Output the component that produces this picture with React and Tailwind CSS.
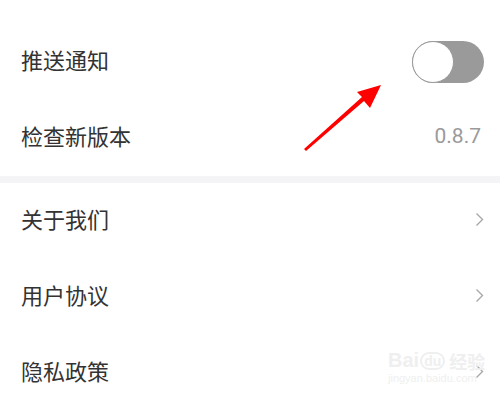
import React from 'react';

const Chevron = () => (
  <svg width="9" height="15" viewBox="0 0 9 15" className="shrink-0 mb-[3px]">
    <path d="M1.5 1.5 L7.5 7.5 L1.5 13.5" fill="none" stroke="#a8a8a8" strokeWidth="1.4" />
  </svg>
);

const Toggle = () => (
  <div className="relative w-[72px] h-[42px] rounded-full bg-[#9a9a9a]">
    <div className="absolute left-0 top-0 w-[42px] h-[42px] rounded-full bg-white border border-[#9a9a9a]" />
  </div>
);

const Row = ({ label, children }) => (
  <div className="flex items-center justify-between h-[76px] pl-[21px] pr-[16px]">
    <span className="text-[22px] text-[#333] pb-[6px]">{label}</span>
    {children}
  </div>
);

export default function App() {
  return (
    <div
      className="relative w-[500px] h-[405px] overflow-hidden bg-white"
      style={{ fontFamily: '"Noto Sans CJK SC", "Noto Sans", sans-serif' }}
    >
      <div className="pt-[24px]">
        <Row label="推送通知">
          <Toggle />
        </Row>
        <Row label="检查新版本">
          <span className="text-[21px] text-[#9a9a9a] pr-[3px] pb-[2px]" style={{ fontFamily: 'Roboto, sans-serif' }}>0.8.7</span>
        </Row>
        <div className="h-[7px] bg-[#f4f4f7]" />
        <Row label="关于我们">
          <Chevron />
        </Row>
        <Row label="用户协议">
          <Chevron />
        </Row>
        <Row label="隐私政策">
          <Chevron />
        </Row>
      </div>

      {/* red annotation arrow */}
      <svg className="absolute left-0 top-0" width="500" height="405" viewBox="0 0 500 405">
        <path d="M304 149 L306 151 L364 101 L370 108 L381 85 L357 92 L362 97 Z" fill="#ff0000" />
      </svg>

      {/* watermark */}
      <div className="absolute left-[388px] top-[350px] flex flex-col items-start text-[#efefef] leading-none" style={{ fontFamily: '"Liberation Sans", sans-serif' }}>
        <div className="flex items-end gap-[1px]">
          <span className="text-[20px] font-bold">Bai</span>
          <span className="text-[14px] font-bold rounded-full border-2 border-[#efefef] px-[2px]">du</span>
          <span className="text-[18px] font-bold ml-[3px]" style={{ fontFamily: '"Noto Sans CJK SC", sans-serif' }}>经验</span>
        </div>
        <span className="text-[11px] mt-[3px]">jingyan.baidu.com</span>
      </div>
    </div>
  );
}
